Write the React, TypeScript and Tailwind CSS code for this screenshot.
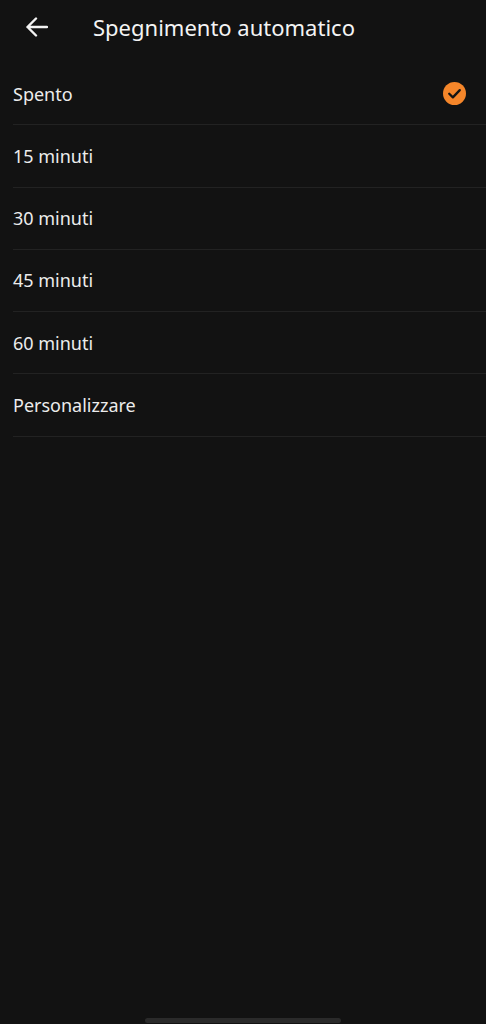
import React from 'react';

const options = ['Spento', '15 minuti', '30 minuti', '45 minuti', '60 minuti', 'Personalizzare'];

function BackArrow() {
  return (
    <svg width="22" height="20" viewBox="0 0 22 20" fill="none">
      <path
        d="M10 1.5 L1.5 10 L10 18.5 M1.5 10 H21"
        stroke="#f2f2f2"
        strokeWidth="2.4"
        strokeLinecap="round"
        strokeLinejoin="round"
      />
    </svg>
  );
}

function CheckBadge() {
  return (
    <svg width="23" height="23" viewBox="0 0 24 24">
      <circle cx="12" cy="12" r="12" fill="#f5862a" />
      <path
        d="M6.5 12.3 L10.3 16 L17.5 8.5"
        fill="none"
        stroke="#141414"
        strokeWidth="2.4"
        strokeLinecap="round"
        strokeLinejoin="round"
      />
    </svg>
  );
}

export default function App() {
  const selected = 'Spento';

  return (
    <div
      className="h-[1024px] w-full bg-[#121212] text-[#ececec] flex flex-col overflow-hidden"
      style={{ fontFamily: '"Noto Sans", "Open Sans", sans-serif' }}
    >
      {/* Header */}
      <div className="h-[54px] flex items-center">
        <div className="pl-[26px] w-[93px] flex items-center">
          <BackArrow />
        </div>
        <h1 className="text-[22px] font-normal text-[#f4f4f4] leading-none">Spegnimento automatico</h1>
      </div>

      {/* Options */}
      <ul className="pt-[9px]">
        {options.map((opt) => (
          <li
            key={opt}
            className="ml-[13px] h-[62.25px] flex items-center justify-between border-b border-[#222222]"
          >
            <span className="text-[18px] leading-none">{opt}</span>
            {opt === selected && (
              <span className="mr-[20px] flex">
                <CheckBadge />
              </span>
            )}
          </li>
        ))}
      </ul>

      {/* Home indicator */}
      <div className="mt-auto mb-[1px] mx-auto w-[196px] h-[5px] rounded-full bg-[#2a2a2a]" />
    </div>
  );
}
